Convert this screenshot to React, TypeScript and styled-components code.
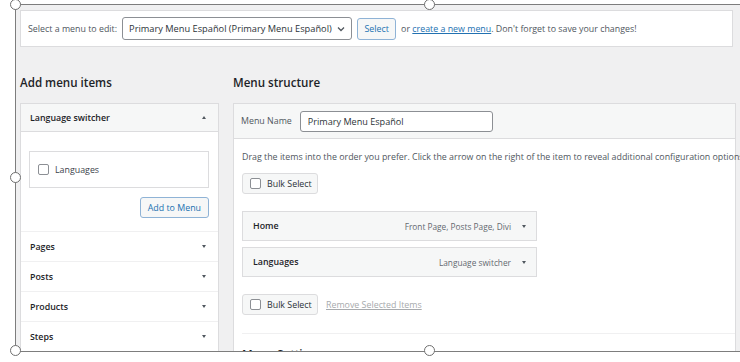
import React from "react";
import styled, { createGlobalStyle } from "styled-components";

const Global = createGlobalStyle`
  html, body { margin: 0; padding: 0; background: #ffffff; }
  body { font-family: "Open Sans", "Noto Sans", sans-serif; color: #3c434a; font-size: 8.85px; }
  * { box-sizing: border-box; }
`;

const Stage = styled.div`
  width: 740px;
  height: 362px;
  overflow: hidden;
  background: #ffffff;
  padding: 4px 0 0 15px;
`;

const Frame = styled.div`
  position: relative;
  width: 831px;
  height: 348px;
  border: 1px solid #7d7d7d;
  display: flex;
`;

const Handle = styled.span<{ $x: number; $y: number }>`
  position: absolute;
  left: ${(p) => p.$x}px;
  top: ${(p) => p.$y}px;
  width: 11px;
  height: 11px;
  border-radius: 50%;
  border: 1.4px solid #6f6f6f;
  background: #ffffff;
  z-index: 2;
`;

const Admin = styled.div`
  flex: 1;
  background: #f0f0f1;
  overflow: hidden;
  padding: 5px 0 0 4px;
  display: flex;
  flex-direction: column;
`;

const ManageBar = styled.div`
  width: 713px;
  height: 37px;
  flex: none;
  background: #ffffff;
  border: 1px solid #dcdcde;
  display: flex;
  align-items: center;
  padding-left: 7px;
  white-space: nowrap;
`;

const Label = styled.span`
  color: #50575e;
`;

const SelectBox = styled.div`
  margin-left: 5px;
  width: 230px;
  height: 23px;
  border: 1px solid #8c8f94;
  border-radius: 3px;
  background: #ffffff;
  display: flex;
  align-items: center;
  justify-content: space-between;
  padding: 0 6px 0 6px;
  color: #2c3338;
  font-size: 9.25px;
`;

const Button = styled.span<{ $tall?: number }>`
  display: inline-flex;
  align-items: center;
  justify-content: center;
  height: ${(p) => p.$tall ?? 21}px;
  padding: 0 7px;
  border: 1px solid #8fb3d6;
  border-radius: 3px;
  background: #f6f7f7;
  color: #2271b1;
  white-space: nowrap;
`;

const SelectButton = styled(Button)`
  margin-left: 5px;
  width: 39px;
  padding: 0;
`;

const Note = styled.span`
  margin-left: 5px;
  color: #50575e;
`;

const Link = styled.span`
  color: #2271b1;
  text-decoration: underline;
`;

const Columns = styled.div`
  margin-top: 26px;
  display: grid;
  grid-template-columns: 199px 503px;
  column-gap: 14px;
  flex: 1;
  min-height: 0;
`;

const Column = styled.div`
  display: flex;
  flex-direction: column;
  min-width: 0;
`;

const Heading = styled.h2`
  margin: 0;
  height: 20px;
  line-height: 20px;
  font-size: 11.6px;
  font-weight: 600;
  color: #1d2327;
  white-space: nowrap;
`;

const Accordion = styled.div`
  margin-top: 10px;
  border: 1px solid #dcdcde;
  border-bottom: none;
  background: #ffffff;
`;

const SectionHead = styled.div<{ $open?: boolean }>`
  height: ${(p) => (p.$open ? 28 : 30)}px;
  display: flex;
  align-items: center;
  justify-content: space-between;
  padding: 0 12px 0 9px;
  font-weight: 600;
  color: #1d2327;
  background: ${(p) => (p.$open ? "#f6f7f7" : "#ffffff")};
  border-bottom: 1px solid ${(p) => (p.$open ? "#dcdcde" : "#f0f0f1")};
`;

const Caret = styled.span<{ $up?: boolean }>`
  width: 0;
  height: 0;
  flex: none;
  border-left: 2.6px solid transparent;
  border-right: 2.6px solid transparent;
  ${(p) =>
    p.$up
      ? "border-bottom: 3.4px solid #50575e;"
      : "border-top: 3.4px solid #50575e;"}
`;

const SectionBody = styled.div`
  padding: 19px 9px 13px 8px;
  display: flex;
  flex-direction: column;
  align-items: flex-end;
  border-bottom: 1px solid #f0f0f1;
`;

const CheckList = styled.div`
  align-self: stretch;
  height: 37px;
  border: 1px solid #dcdcde;
  display: flex;
  align-items: center;
  padding-left: 8px;
  gap: 6px;
`;

const Check = styled.span`
  width: 11px;
  height: 11px;
  border: 1px solid #8c8f94;
  border-radius: 2px;
  background: #ffffff;
  flex: none;
`;

const AddButton = styled(Button)`
  margin-top: 9px;
`;

const StructureBox = styled.div`
  margin-top: 10px;
  border: 1px solid #dcdcde;
  background: #ffffff;
  flex: 1;
`;

const NameBar = styled.div`
  height: 35px;
  background: #f6f7f7;
  border-bottom: 1px solid #dcdcde;
  display: flex;
  align-items: center;
  padding-left: 7px;
  gap: 8px;
`;

const NameInput = styled.div`
  width: 193px;
  height: 21px;
  border: 1px solid #8c8f94;
  border-radius: 3px;
  background: #ffffff;
  display: flex;
  align-items: center;
  padding-left: 7px;
  color: #2c3338;
  font-size: 9.1px;
`;

const Body = styled.div`
  padding: 12px 0 0 8px;
  display: flex;
  flex-direction: column;
  align-items: flex-start;
`;

const Instructions = styled.div`
  height: 12px;
  line-height: 12px;
  white-space: nowrap;
  color: #50575e;
`;

const BulkRow = styled.div<{ $top: number }>`
  margin-top: ${(p) => p.$top}px;
  display: flex;
  align-items: center;
  gap: 8px;
`;

const BulkButton = styled.span`
  width: 76px;
  height: 21px;
  border: 1px solid #dcdcde;
  border-radius: 3px;
  background: #f6f7f7;
  display: flex;
  align-items: center;
  padding-left: 7px;
  gap: 6px;
  color: #2c3338;
`;

const Muted = styled.span`
  color: #a7aaad;
  text-decoration: underline;
`;

const ItemList = styled.div`
  margin-top: 17px;
  display: flex;
  flex-direction: column;
  gap: 6px;
`;

const Item = styled.div`
  width: 295px;
  height: 30px;
  border: 1px solid #dcdcde;
  background: #f6f7f7;
  display: flex;
  align-items: center;
  padding: 0 10px 0 10px;
  font-weight: 600;
  color: #1d2327;
`;

const ItemMeta = styled.span`
  margin-left: auto;
  margin-right: 11px;
  font-weight: 400;
  font-size: 8.3px;
  color: #646970;
`;

const Settings = styled.div`
  margin-top: 18px;
  align-self: stretch;
  border-top: 1px solid #f0f0f1;
  padding-top: 13px;
  font-size: 11.6px;
  font-weight: 600;
  color: #1d2327;
  line-height: 16px;
`;

const Chevron = () => (
  <svg width="8" height="6" viewBox="0 0 8 6">
    <polyline points="1,1.5 4,4.5 7,1.5" fill="none" stroke="#50575e" strokeWidth="1.3" />
  </svg>
);

const sections = ["Pages", "Posts", "Products", "Steps"];

const items = [
  { title: "Home", meta: "Front Page, Posts Page, Divi" },
  { title: "Languages", meta: "Language switcher" },
];

export default function App() {
  return (
    <>
      <Global />
      <Stage>
        <Frame>
          <Admin>
            <ManageBar>
              <Label>Select a menu to edit:</Label>
              <SelectBox>
                <span>Primary Menu Español (Primary Menu Español)</span>
                <Chevron />
              </SelectBox>
              <SelectButton $tall={22}>Select</SelectButton>
              <Note>
                or <Link>create a new menu</Link>. Don't forget to save your changes!
              </Note>
            </ManageBar>
            <Columns>
              <Column>
                <Heading>Add menu items</Heading>
                <Accordion>
                  <SectionHead $open>
                    <span>Language switcher</span>
                    <Caret $up />
                  </SectionHead>
                  <SectionBody>
                    <CheckList>
                      <Check />
                      <span>Languages</span>
                    </CheckList>
                    <AddButton>Add to Menu</AddButton>
                  </SectionBody>
                  {sections.map((s) => (
                    <SectionHead key={s}>
                      <span>{s}</span>
                      <Caret />
                    </SectionHead>
                  ))}
                </Accordion>
              </Column>
              <Column>
                <Heading>Menu structure</Heading>
                <StructureBox>
                  <NameBar>
                    <Label>Menu Name</Label>
                    <NameInput>Primary Menu Español</NameInput>
                  </NameBar>
                  <Body>
                    <Instructions>
                      Drag the items into the order you prefer. Click the arrow on the right of the item to reveal additional configuration options.
                    </Instructions>
                    <BulkRow $top={10}>
                      <BulkButton>
                        <Check />
                        Bulk Select
                      </BulkButton>
                    </BulkRow>
                    <ItemList>
                      {items.map((it) => (
                        <Item key={it.title}>
                          <span>{it.title}</span>
                          <ItemMeta>{it.meta}</ItemMeta>
                          <Caret />
                        </Item>
                      ))}
                    </ItemList>
                    <BulkRow $top={17}>
                      <BulkButton>
                        <Check />
                        Bulk Select
                      </BulkButton>
                      <Muted>Remove Selected Items</Muted>
                    </BulkRow>
                    <Settings>Menu Settings</Settings>
                  </Body>
                </StructureBox>
              </Column>
            </Columns>
          </Admin>
          <Handle $x={-6} $y={-6} />
          <Handle $x={408} $y={-6} />
          <Handle $x={-6} $y={167} />
          <Handle $x={-6} $y={340} />
          <Handle $x={408} $y={340} />
        </Frame>
      </Stage>
    </>
  );
}
